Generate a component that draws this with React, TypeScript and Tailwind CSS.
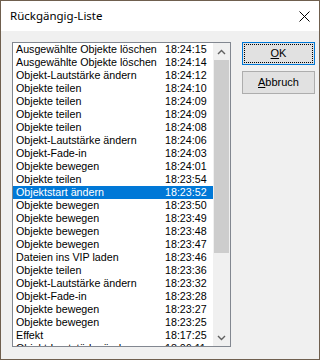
import React from "react";

type Entry = { name: string; time: string };

const entries: Entry[] = [
  { name: "Ausgewählte Objekte löschen", time: "18:24:15" },
  { name: "Ausgewählte Objekte löschen", time: "18:24:14" },
  { name: "Objekt-Lautstärke ändern", time: "18:24:12" },
  { name: "Objekte teilen", time: "18:24:10" },
  { name: "Objekte teilen", time: "18:24:09" },
  { name: "Objekte teilen", time: "18:24:09" },
  { name: "Objekte teilen", time: "18:24:08" },
  { name: "Objekt-Lautstärke ändern", time: "18:24:06" },
  { name: "Objekt-Fade-in", time: "18:24:03" },
  { name: "Objekte bewegen", time: "18:24:01" },
  { name: "Objekte teilen", time: "18:23:54" },
  { name: "Objektstart ändern", time: "18:23:52" },
  { name: "Objekte bewegen", time: "18:23:50" },
  { name: "Objekte bewegen", time: "18:23:49" },
  { name: "Objekte bewegen", time: "18:23:48" },
  { name: "Objekte bewegen", time: "18:23:47" },
  { name: "Dateien ins VIP laden", time: "18:23:46" },
  { name: "Objekte teilen", time: "18:23:36" },
  { name: "Objekt-Lautstärke ändern", time: "18:23:32" },
  { name: "Objekt-Fade-in", time: "18:23:28" },
  { name: "Objekte bewegen", time: "18:23:27" },
  { name: "Objekte bewegen", time: "18:23:25" },
  { name: "Effekt", time: "18:17:25" },
  { name: "Objekt-Lautstärke ändern", time: "18:06:11" },
];

const SELECTED = 11;

const Chevron: React.FC<{ down?: boolean }> = ({ down }) => (
  <svg width="9" height="6" viewBox="0 0 9 6" className="block">
    <path
      d={down ? "M1 1 L4.5 4.5 L8 1" : "M1 5 L4.5 1.5 L8 5"}
      fill="none"
      stroke="#606060"
      strokeWidth="1.4"
    />
  </svg>
);

const App: React.FC = () => {
  return (
    <div
      className="w-[320px] h-[360px] border border-[#6f5f4e] flex flex-col overflow-hidden text-black"
      style={{ fontFamily: '"Liberation Sans", Arial, sans-serif' }}
    >
      {/* title bar */}
      <div className="h-[30px] bg-white flex items-center justify-between pl-[9px] pr-[9px] shrink-0">
        <span
          className="text-[11.5px] text-black"
          style={{ fontFamily: '"Noto Sans", sans-serif' }}
        >
          Rückgängig-Liste
        </span>
        <svg width="11" height="11" viewBox="0 0 11 11" className="block">
          <path d="M0.5 0.5 L10.5 10.5 M10.5 0.5 L0.5 10.5" stroke="#000" strokeWidth="1" />
        </svg>
      </div>

      <div className="flex-1 bg-[#f0f0f0] flex items-start pt-[11px] pl-[11px] gap-[11px]">
        {/* list box */}
        <div className="w-[219px] h-[305px] border border-[#828790] bg-white flex overflow-hidden">
          <div className="w-[200px] flex flex-col overflow-hidden">
            {entries.map((e, i) => (
              <div
                key={i}
                className={
                  "h-[13px] shrink-0 flex items-center text-[10.7px] leading-[13px] pl-[3px] whitespace-nowrap " +
                  (i === SELECTED ? "bg-[#0078d7] text-white" : "text-black")
                }
              >
                <span className="w-[149px] shrink-0">{e.name}</span>
                <span>{e.time}</span>
              </div>
            ))}
          </div>
          <div className="w-[17px] bg-[#f0f0f0] flex flex-col">
            <div className="h-[17px] flex items-center justify-center shrink-0">
              <Chevron />
            </div>
            <div className="flex-1 flex flex-col px-[1px]">
              <div className="h-[193px] bg-[#cdcdcd]" />
            </div>
            <div className="h-[17px] flex items-center justify-center shrink-0">
              <Chevron down />
            </div>
          </div>
        </div>

        {/* buttons */}
        <div className="flex flex-col gap-[6px] w-[73px]">
          <button className="h-[23px] border border-[#0078d7] bg-[#e1e1e1] p-[1px] text-[11px]">
            <div className="h-full border border-dotted border-black flex items-center justify-center">
              <span>
                <span className="underline">O</span>K
              </span>
            </div>
          </button>
          <button className="h-[23px] border border-[#adadad] bg-[#e1e1e1] text-[11px] flex items-center justify-center">
            <span>
              <span className="underline">A</span>bbruch
            </span>
          </button>
        </div>
      </div>
    </div>
  );
};

export default App;
